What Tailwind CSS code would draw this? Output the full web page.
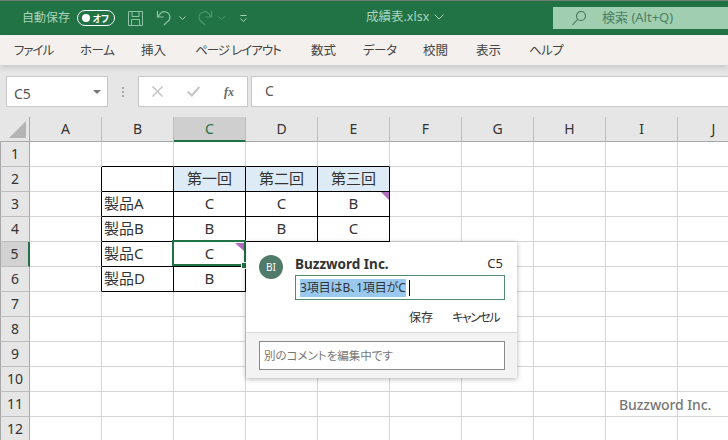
<!DOCTYPE html>
<html lang="ja">
<head>
<meta charset="utf-8">
<script src="https://cdn.jsdelivr.net/npm/@tailwindcss/browser@4"></script>
</head>
<body class="w-[728px] h-[440px] overflow-hidden bg-white relative font-['Noto_Sans','Noto_Sans_CJK_JP',sans-serif] text-[#333]">

<!-- title bar -->
<div class="h-[35px] bg-[#217346] border-t border-[#6f7f76] flex items-center relative">
  <span class="ml-[22px] text-[12px] leading-none text-[#a9d3bb]">自動保存</span>
  <div class="ml-[7px] w-[38px] h-[16px] rounded-full border border-white flex items-center justify-between pl-[4px] pr-[5px]">
    <span class="w-[8px] h-[8px] rounded-full bg-white"></span>
    <span class="text-[9px] leading-none text-white font-bold [font-feature-settings:'palt']">オフ</span>
  </div>
  <svg class="ml-[12px]" width="17" height="17" viewBox="0 0 17 17" fill="none" stroke="#8fc4a6" stroke-width="1"><path d="M1.500 1.500h14v14h-14z"/><path d="M5 1.500v5h7v-5M4.500 15.500v-6h8v6"/></svg>
  <svg class="ml-[12px]" width="18" height="18" viewBox="0 0 18 18" fill="none" stroke="#8fc4a6" stroke-width="1.200"><path d="M1.500 2v6h6"/><path d="M2 8c2-4 5-6 8-5 5 1.500 5 8 1 10l-3 3"/></svg>
  <svg class="ml-[5px]" width="7" height="5" viewBox="0 0 7 5" fill="none" stroke="#a9d3bb"><path d="M0.500 0.500l3 3 3-3"/></svg>
  <svg class="ml-[9px]" width="18" height="18" viewBox="0 0 18 18" fill="none" stroke="#4f9570" stroke-width="1.200"><path d="M16.500 2v6h-6"/><path d="M16 8c-2-4-5-6-8-5-5 1.500-5 8-1 10l3 3"/></svg>
  <svg class="ml-[5px]" width="7" height="5" viewBox="0 0 7 5" fill="none" stroke="#4f9570"><path d="M0.500 0.500l3 3 3-3"/></svg>
  <svg class="ml-[14px]" width="9" height="9" viewBox="0 0 9 9" fill="none" stroke="#a9d3bb"><path d="M1.500 1.500h6M1.500 4.500l3 3 3-3"/></svg>
  <div class="absolute left-[366px] top-[10px] flex items-center text-[12.500px] leading-none text-[#a9d3bb]">
    <span>成績表.xlsx</span>
    <svg class="ml-[5px]" width="10" height="6" viewBox="0 0 10 6" fill="none" stroke="#a9d3bb"><path d="M0.500 0.500l4.500 4.500 4.500-4.500"/></svg>
  </div>
  <div class="absolute left-[553px] top-[6px] w-[175px] h-[22px] bg-[#9fcfb0] flex items-center text-[13px] text-[#4e7f64]">
    <svg class="ml-[18px]" width="16" height="16" viewBox="0 0 16 16" fill="none" stroke="#3f7157" stroke-width="1.100"><circle cx="10" cy="6" r="4.500"/><path d="M6.500 9.500L1.500 15"/></svg>
    <span class="ml-[15px]">検索 (Alt+Q)</span>
  </div>
</div>

<!-- ribbon tabs -->
<div class="h-[30px] bg-[#f3f0ee] flex items-center text-[12.500px] text-[#444] relative z-10 shadow-[0_2px_6px_rgba(0,0,0,0.15)] pt-[2px] whitespace-nowrap [font-feature-settings:'palt']">
  <span class="ml-[14px] w-[38px] tracking-[-1px]">ファイル</span>
  <span class="ml-[28px] w-[33px] tracking-[-0.5px]">ホーム</span>
  <span class="ml-[28px] w-[25px]">挿入</span>
  <span class="ml-[29px] w-[86px] tracking-[-1px]">ページ レイアウト</span>
  <span class="ml-[30px] w-[26px]">数式</span>
  <span class="ml-[26px] w-[33px] tracking-[-0.5px]">データ</span>
  <span class="ml-[27px] w-[25px]">校閲</span>
  <span class="ml-[28px] w-[26px]">表示</span>
  <span class="ml-[27px] tracking-[-0.5px]">ヘルプ</span>
</div>

<!-- formula bar -->
<div class="h-[52px] bg-[#e6e6e6] flex items-start pt-[11px] pl-[6px]">
  <div class="w-[102px] h-[31px] bg-white border border-[#c8c8c8] flex items-center justify-between pl-[7px] pr-[6px] text-[14px] text-[#555]">
    <span class="pt-[4px]">C5</span>
    <span class="w-0 h-0 border-x-[4px] border-x-transparent border-t-[4px] border-t-[#777]"></span>
  </div>
  <div class="w-[30px] h-[31px] flex flex-col items-center justify-center gap-[2px]">
    <span class="w-[2px] h-[2px] bg-[#aaa]"></span><span class="w-[2px] h-[2px] bg-[#aaa]"></span><span class="w-[2px] h-[2px] bg-[#aaa]"></span>
  </div>
  <div class="w-[110px] h-[31px] bg-white border border-[#c8c8c8] flex items-center">
    <svg class="ml-[13px]" width="11" height="11" viewBox="0 0 11 11" fill="none" stroke="#c4c4c4" stroke-width="1.500"><path d="M0.500 0.500l10 10M10.500 0.500l-10 10"/></svg>
    <svg class="ml-[24px]" width="13" height="11" viewBox="0 0 13 11" fill="none" stroke="#c4c4c4" stroke-width="2"><path d="M0.800 5.500l4 4 7.500-8.500"/></svg>
    <span class="ml-[24px] text-[12px] leading-none italic font-bold font-['Liberation_Serif',serif] text-[#666]">fx</span>
  </div>
  <div class="ml-[3px] flex-1 h-[31px] bg-white border-y border-l border-[#c8c8c8] pl-[13px] pb-[2px] flex items-center text-[14px] text-[#555]">C</div>
</div>

<!-- sheet -->
<div class="grid grid-cols-[30px_repeat(10,72px)] grid-rows-[25px_repeat(12,25px)] text-[14px] text-[#333] leading-none [&>div]:flex [&>div]:items-center [&>div]:justify-center">
  <!-- header -->
  <div class="bg-[#e6e6e6] border-r border-b border-[#a8a8a8] !items-end !justify-end"><svg class="mr-[3px] mb-[3px]" width="17" height="17" viewBox="0 0 17 17"><path d="M17 0V17H0Z" fill="#b4b4b4"/></svg></div>
  <div class="bg-[#e6e6e6] border-r border-b border-b-[#a8a8a8] border-r-[#bdbdbd]">A</div>
  <div class="bg-[#e6e6e6] border-r border-b border-b-[#a8a8a8] border-r-[#bdbdbd]">B</div>
  <div class="bg-[#cfcfcf] border-r border-b-2 border-b-[#217346] border-r-[#bdbdbd] text-[#217346]">C</div>
  <div class="bg-[#e6e6e6] border-r border-b border-b-[#a8a8a8] border-r-[#bdbdbd]">D</div>
  <div class="bg-[#e6e6e6] border-r border-b border-b-[#a8a8a8] border-r-[#bdbdbd]">E</div>
  <div class="bg-[#e6e6e6] border-r border-b border-b-[#a8a8a8] border-r-[#bdbdbd]">F</div>
  <div class="bg-[#e6e6e6] border-r border-b border-b-[#a8a8a8] border-r-[#bdbdbd]">G</div>
  <div class="bg-[#e6e6e6] border-r border-b border-b-[#a8a8a8] border-r-[#bdbdbd]">H</div>
  <div class="bg-[#e6e6e6] border-r border-b border-b-[#a8a8a8] border-r-[#bdbdbd]">I</div>
  <div class="bg-[#e6e6e6] border-r border-b border-b-[#a8a8a8] border-r-[#bdbdbd]">J</div>
  <!-- 1 -->
  <div class="bg-[#e6e6e6] border-l border-r border-b border-l-[#a8a8a8] border-r-[#a8a8a8] border-b-[#bdbdbd]">1</div>
  <div class="border-r border-b border-[#d4d4d4]"></div>
  <div class="border-r border-b border-[#d4d4d4] border-b-black border-r-[#d4d4d4]"></div>
  <div class="border-r border-b border-[#d4d4d4] border-b-black"></div>
  <div class="border-r border-b border-[#d4d4d4] border-b-black"></div>
  <div class="border-r border-b border-[#d4d4d4] border-b-black"></div>
  <div class="border-r border-b border-[#d4d4d4]"></div>
  <div class="border-r border-b border-[#d4d4d4]"></div>
  <div class="border-r border-b border-[#d4d4d4]"></div>
  <div class="border-r border-b border-[#d4d4d4]"></div>
  <div class="border-r border-b border-[#d4d4d4]"></div>
  <!-- 2 -->
  <div class="bg-[#e6e6e6] border-l border-r border-b border-l-[#a8a8a8] border-r-[#a8a8a8] border-b-[#bdbdbd]">2</div>
  <div class="border-r border-b border-r-black border-b-[#d4d4d4]"></div>
  <div class="border-r border-b border-black"></div>
  <div class="border-r border-b border-black bg-[#ddebf7] text-[15px] pb-[2px]">第一回</div>
  <div class="border-r border-b border-black bg-[#ddebf7] text-[15px] pb-[2px]">第二回</div>
  <div class="border-r border-b border-black bg-[#ddebf7] text-[15px] pb-[2px]">第三回</div>
  <div class="border-r border-b border-[#d4d4d4]"></div>
  <div class="border-r border-b border-[#d4d4d4]"></div>
  <div class="border-r border-b border-[#d4d4d4]"></div>
  <div class="border-r border-b border-[#d4d4d4]"></div>
  <div class="border-r border-b border-[#d4d4d4]"></div>
  <!-- 3 -->
  <div class="bg-[#e6e6e6] border-l border-r border-b border-l-[#a8a8a8] border-r-[#a8a8a8] border-b-[#bdbdbd]">3</div>
  <div class="border-r border-b border-r-black border-b-[#d4d4d4]"></div>
  <div class="border-r border-b border-black !justify-start pl-[2px] text-[15px] pb-[2px]">製品A</div>
  <div class="border-r border-b border-black text-[15px] pb-[2px]">C</div>
  <div class="border-r border-b border-black text-[15px] pb-[2px]">C</div>
  <div class="border-r border-b border-black relative text-[15px] pb-[2px]">B<svg class="absolute right-0 top-0" width="8" height="8" viewBox="0 0 8 8"><path d="M0 0H8V8Z" fill="#b26bbd"/></svg></div>
  <div class="border-r border-b border-[#d4d4d4]"></div>
  <div class="border-r border-b border-[#d4d4d4]"></div>
  <div class="border-r border-b border-[#d4d4d4]"></div>
  <div class="border-r border-b border-[#d4d4d4]"></div>
  <div class="border-r border-b border-[#d4d4d4]"></div>
  <!-- 4 -->
  <div class="bg-[#e6e6e6] border-l border-r border-b border-l-[#a8a8a8] border-r-[#a8a8a8] border-b-[#bdbdbd]">4</div>
  <div class="border-r border-b border-r-black border-b-[#d4d4d4]"></div>
  <div class="border-r border-b border-black !justify-start pl-[2px] text-[15px] pb-[2px]">製品B</div>
  <div class="border-r border-b border-black text-[15px] pb-[2px]">B</div>
  <div class="border-r border-b border-black text-[15px] pb-[2px]">B</div>
  <div class="border-r border-b border-black text-[15px] pb-[2px]">C</div>
  <div class="border-r border-b border-[#d4d4d4]"></div>
  <div class="border-r border-b border-[#d4d4d4]"></div>
  <div class="border-r border-b border-[#d4d4d4]"></div>
  <div class="border-r border-b border-[#d4d4d4]"></div>
  <div class="border-r border-b border-[#d4d4d4]"></div>
  <!-- 5 -->
  <div class="bg-[#d2d2d2] border-l border-r-2 border-b border-l-[#a8a8a8] border-r-[#217346] border-b-[#bdbdbd]">5</div>
  <div class="border-r border-b border-r-black border-b-[#d4d4d4]"></div>
  <div class="border-r border-b border-black !justify-start pl-[2px] text-[15px] pb-[2px]">製品C</div>
  <div class="border-r border-b border-black relative text-[15px] pb-[2px]">C
    <div class="absolute left-[-2px] top-[-2px] w-[74px] h-[26px] border-2 border-[#217346]"></div>
    <svg class="absolute right-[1px] top-[1px]" width="9" height="8" viewBox="0 0 9 8"><path d="M0 0H9V8Z" fill="#b26bbd"/></svg>
    <span class="absolute right-[-3px] bottom-[-3px] w-[5px] h-[5px] bg-[#217346] border border-white box-content"></span>
  </div>
  <div class="border-r border-b border-[#d4d4d4]"></div>
  <div class="border-r border-b border-[#d4d4d4]"></div>
  <div class="border-r border-b border-[#d4d4d4]"></div>
  <div class="border-r border-b border-[#d4d4d4]"></div>
  <div class="border-r border-b border-[#d4d4d4]"></div>
  <div class="border-r border-b border-[#d4d4d4]"></div>
  <div class="border-r border-b border-[#d4d4d4]"></div>
  <!-- 6 -->
  <div class="bg-[#e6e6e6] border-l border-r border-b border-l-[#a8a8a8] border-r-[#a8a8a8] border-b-[#bdbdbd]">6</div>
  <div class="border-r border-b border-r-black border-b-[#d4d4d4]"></div>
  <div class="border-r border-b border-black !justify-start pl-[2px] text-[15px] pb-[2px]">製品D</div>
  <div class="border-r border-b border-black text-[15px] pb-[2px]">B</div>
  <div class="border-r border-b border-[#d4d4d4]"></div>
  <div class="border-r border-b border-[#d4d4d4]"></div>
  <div class="border-r border-b border-[#d4d4d4]"></div>
  <div class="border-r border-b border-[#d4d4d4]"></div>
  <div class="border-r border-b border-[#d4d4d4]"></div>
  <div class="border-r border-b border-[#d4d4d4]"></div>
  <div class="border-r border-b border-[#d4d4d4]"></div>
  <!-- 7 -->
  <div class="bg-[#e6e6e6] border-l border-r border-b border-l-[#a8a8a8] border-r-[#a8a8a8] border-b-[#bdbdbd]">7</div>
  <div class="border-r border-b border-[#d4d4d4]"></div><div class="border-r border-b border-[#d4d4d4]"></div><div class="border-r border-b border-[#d4d4d4]"></div><div class="border-r border-b border-[#d4d4d4]"></div><div class="border-r border-b border-[#d4d4d4]"></div><div class="border-r border-b border-[#d4d4d4]"></div><div class="border-r border-b border-[#d4d4d4]"></div><div class="border-r border-b border-[#d4d4d4]"></div><div class="border-r border-b border-[#d4d4d4]"></div><div class="border-r border-b border-[#d4d4d4]"></div>
  <!-- 8 -->
  <div class="bg-[#e6e6e6] border-l border-r border-b border-l-[#a8a8a8] border-r-[#a8a8a8] border-b-[#bdbdbd]">8</div>
  <div class="border-r border-b border-[#d4d4d4]"></div><div class="border-r border-b border-[#d4d4d4]"></div><div class="border-r border-b border-[#d4d4d4]"></div><div class="border-r border-b border-[#d4d4d4]"></div><div class="border-r border-b border-[#d4d4d4]"></div><div class="border-r border-b border-[#d4d4d4]"></div><div class="border-r border-b border-[#d4d4d4]"></div><div class="border-r border-b border-[#d4d4d4]"></div><div class="border-r border-b border-[#d4d4d4]"></div><div class="border-r border-b border-[#d4d4d4]"></div>
  <!-- 9 -->
  <div class="bg-[#e6e6e6] border-l border-r border-b border-l-[#a8a8a8] border-r-[#a8a8a8] border-b-[#bdbdbd]">9</div>
  <div class="border-r border-b border-[#d4d4d4]"></div><div class="border-r border-b border-[#d4d4d4]"></div><div class="border-r border-b border-[#d4d4d4]"></div><div class="border-r border-b border-[#d4d4d4]"></div><div class="border-r border-b border-[#d4d4d4]"></div><div class="border-r border-b border-[#d4d4d4]"></div><div class="border-r border-b border-[#d4d4d4]"></div><div class="border-r border-b border-[#d4d4d4]"></div><div class="border-r border-b border-[#d4d4d4]"></div><div class="border-r border-b border-[#d4d4d4]"></div>
  <!-- 10 -->
  <div class="bg-[#e6e6e6] border-l border-r border-b border-l-[#a8a8a8] border-r-[#a8a8a8] border-b-[#bdbdbd]">10</div>
  <div class="border-r border-b border-[#d4d4d4]"></div><div class="border-r border-b border-[#d4d4d4]"></div><div class="border-r border-b border-[#d4d4d4]"></div><div class="border-r border-b border-[#d4d4d4]"></div><div class="border-r border-b border-[#d4d4d4]"></div><div class="border-r border-b border-[#d4d4d4]"></div><div class="border-r border-b border-[#d4d4d4]"></div><div class="border-r border-b border-[#d4d4d4]"></div><div class="border-r border-b border-[#d4d4d4]"></div><div class="border-r border-b border-[#d4d4d4]"></div>
  <!-- 11 -->
  <div class="bg-[#e6e6e6] border-l border-r border-b border-l-[#a8a8a8] border-r-[#a8a8a8] border-b-[#bdbdbd]">11</div>
  <div class="border-r border-b border-[#d4d4d4]"></div><div class="border-r border-b border-[#d4d4d4]"></div><div class="border-r border-b border-[#d4d4d4]"></div><div class="border-r border-b border-[#d4d4d4]"></div><div class="border-r border-b border-[#d4d4d4]"></div><div class="border-r border-b border-[#d4d4d4]"></div><div class="border-r border-b border-[#d4d4d4]"></div><div class="border-r border-b border-[#d4d4d4]"></div><div class="border-r border-b border-[#d4d4d4]"></div><div class="border-r border-b border-[#d4d4d4]"></div>
  <!-- 12 -->
  <div class="bg-[#e6e6e6] border-l border-r border-b border-l-[#a8a8a8] border-r-[#a8a8a8] border-b-[#bdbdbd]">12</div>
  <div class="border-r border-b border-[#d4d4d4]"></div><div class="border-r border-b border-[#d4d4d4]"></div><div class="border-r border-b border-[#d4d4d4]"></div><div class="border-r border-b border-[#d4d4d4]"></div><div class="border-r border-b border-[#d4d4d4]"></div><div class="border-r border-b border-[#d4d4d4]"></div><div class="border-r border-b border-[#d4d4d4]"></div><div class="border-r border-b border-[#d4d4d4]"></div><div class="border-r border-b border-[#d4d4d4]"></div><div class="border-r border-b border-[#d4d4d4]"></div>
</div>

<!-- comment popup -->
<div class="absolute left-[246px] top-[242px] w-[271px] h-[136px] bg-white shadow-[0_1px_5px_rgba(0,0,0,0.3)] flex flex-col text-[#333]">
  <div class="flex-1 relative pl-[13px] pt-[13px] flex">
    <div class="w-[24px] h-[24px] rounded-full bg-[#507a6a] text-white text-[10px] flex items-center justify-center">BI</div>
    <div class="ml-[12px] w-[210px]">
      <div class="flex justify-between items-center h-[18px] text-[13.500px] pr-[2px]">
        <span class="font-bold">Buzzword Inc.</span><span class="text-[13px]">C5</span>
      </div>
      <div class="mt-[2px] h-[25px] border border-[#4f8a6e] flex items-center pl-[4px] text-[12px] [font-feature-settings:'palt']">
        <span class="bg-[#99c9ef] leading-[18px] tracking-[-0.1px]">3項目はB、1項目がC</span><span class="ml-[3px] w-px h-[16px] bg-black"></span>
      </div>
      <div class="mt-[12px] flex justify-end text-[12px] leading-none pr-[6px] gap-[19px] [font-feature-settings:'palt']">
        <span>保存</span><span class="tracking-[-1.500px]">キャンセル</span>
      </div>
    </div>
  </div>
  <div class="h-[46px] bg-[#f3f3f3] border-t border-[#d8d8d8] pl-[13px] pt-[8px]">
    <div class="w-[246px] h-[29px] bg-white border border-[#8a8a8a] flex items-center pl-[4px] text-[11.500px] text-[#777] [font-feature-settings:'palt']">別のコメントを編集中です</div>
  </div>
</div>

<!-- watermark -->
<div class="absolute left-[619px] top-[396px] text-[14px] font-medium leading-[18px] text-[#777] tracking-[-0.1px]">Buzzword Inc.</div>
</body>
</html>
